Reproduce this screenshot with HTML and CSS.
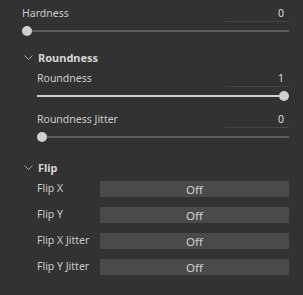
FILE: index.html
```html
<!DOCTYPE html>
<html>
<head>
<meta charset="utf-8">
<link rel="stylesheet" href="styles.css">
</head>
<body>
<div class="panel">
  <div class="param">
    <div class="param-head">
      <span class="label">Hardness</span>
      <span class="value">0</span>
    </div>
    <div class="slider">
      <div class="fill" style="width:0%"></div>
      <div class="thumb"></div>
      <div class="rest"></div>
    </div>
  </div>

  <div class="group group-round">
    <div class="group-head">
      <svg class="chev" width="9" height="5" viewBox="0 0 9 5"><path d="M0.5 0.5 L4.5 4.5 L8.5 0.5" fill="none" stroke="#a8a8a8" stroke-width="1"/></svg>
      <span class="group-title">Roundness</span>
    </div>
    <div class="group-body params">
      <div class="param">
        <div class="param-head">
          <span class="label">Roundness</span>
          <span class="value">1</span>
        </div>
        <div class="slider">
          <div class="fill" style="width:100%"></div>
          <div class="thumb"></div>
          <div class="rest"></div>
        </div>
      </div>
      <div class="param">
        <div class="param-head">
          <span class="label">Roundness Jitter</span>
          <span class="value">0</span>
        </div>
        <div class="slider">
          <div class="fill" style="width:0%"></div>
          <div class="thumb"></div>
          <div class="rest"></div>
        </div>
      </div>
    </div>
  </div>

  <div class="group group-flip">
    <div class="group-head">
      <svg class="chev" width="9" height="5" viewBox="0 0 9 5"><path d="M0.5 0.5 L4.5 4.5 L8.5 0.5" fill="none" stroke="#a8a8a8" stroke-width="1"/></svg>
      <span class="group-title">Flip</span>
    </div>
    <div class="group-body flips">
      <div class="toggle-row"><span class="label">Flip X</span><span class="button">Off</span></div>
      <div class="toggle-row"><span class="label">Flip Y</span><span class="button">Off</span></div>
      <div class="toggle-row"><span class="label">Flip X Jitter</span><span class="button">Off</span></div>
      <div class="toggle-row"><span class="label">Flip Y Jitter</span><span class="button">Off</span></div>
    </div>
  </div>
</div>
</body>
</html>
```
FILE: styles.css
```css
html, body {
  margin: 0;
  padding: 0;
  background: #323232;
  width: 303px;
  height: 295px;
  overflow: hidden;
}
.panel {
  font-family: "Noto Sans", "Open Sans", sans-serif;
  font-size: 10.5px;
  color: #cacaca;
  padding: 5px 14px 0 22px;
}
.param {
  display: flex;
  flex-direction: column;
}
.param-head {
  display: flex;
  justify-content: space-between;
  align-items: flex-start;
  height: 17px;
}
.label {
  line-height: 16px;
}
.value {
  width: 64px;
  box-sizing: border-box;
  text-align: right;
  padding-right: 5px;
  line-height: 16px;
  border-bottom: 1px solid #444444;
  color: #dcdcdc;
}
.slider {
  display: flex;
  align-items: center;
  height: 10px;
  margin-top: 4px;
}
.fill {
  height: 2px;
  background: #d0d0d0;
  flex: 0 0 auto;
  max-width: calc(100% - 10px);
}
.thumb {
  width: 10px;
  height: 10px;
  border-radius: 50%;
  background: #d0d0d0;
  flex: 0 0 10px;
}
.rest {
  height: 2px;
  background: #5e5e5e;
  flex: 1 1 auto;
}
.group-round {
  margin-top: 13px;
}
.group-flip {
  margin-top: 17px;
}
.group-head {
  display: flex;
  align-items: center;
  height: 17px;
  margin-left: 2px;
}
.chev {
  margin-right: 5px;
  flex: 0 0 9px;
}
.group-title {
  font-weight: bold;
  font-size: 11px;
  line-height: 17px;
  color: #d6d6d6;
}
.group-body {
  padding-left: 15px;
}
.params {
  display: flex;
  flex-direction: column;
  gap: 10px;
  margin-top: 4px;
}
.flips {
  display: flex;
  flex-direction: column;
  gap: 10px;
  margin-top: 5px;
}
.toggle-row {
  display: flex;
  align-items: flex-start;
  height: 16px;
}
.toggle-row .label {
  width: 63px;
  flex: 0 0 63px;
  line-height: 14px;
}
.button {
  flex: 1;
  height: 16px;
  box-sizing: border-box;
  padding-top: 1px;
  font-size: 11.5px;
  line-height: 15px;
  background: #4a4a4a;
  text-align: center;
  color: #d0d0d0;
}
```
